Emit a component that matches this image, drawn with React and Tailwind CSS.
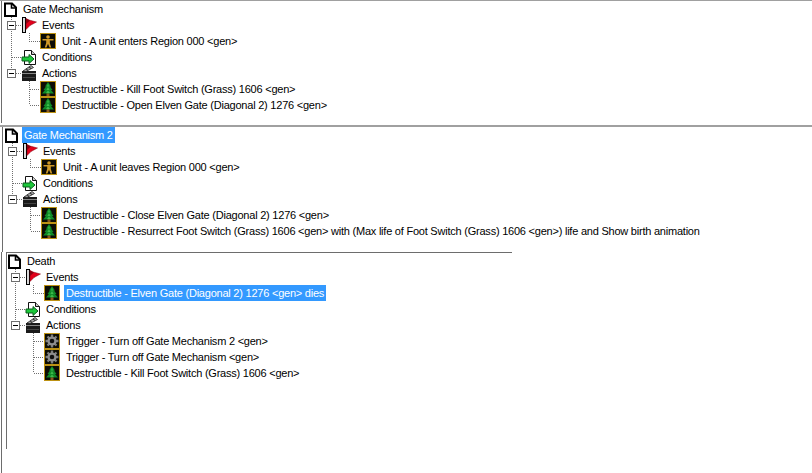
import React from 'react';

const font = { fontFamily: '"Liberation Sans", sans-serif' };

function PageIcon() {
  return (
    <svg width="16" height="16" viewBox="0 0 16 16" className="shrink-0">
      <path d="M3 2.5H10L14 6.5V15H3Z" fill="#fff" stroke="#000" strokeWidth="2" />
      <path d="M9.5 2.5V7H14" fill="none" stroke="#000" strokeWidth="1.6" />
    </svg>
  );
}

function FlagIcon() {
  return (
    <svg width="16" height="16" viewBox="0 0 16 16" className="shrink-0">
      <rect x="1.5" y="0.5" width="3" height="15" fill="#d8d8d8" stroke="#000" />
      <path d="M5 1.5L8 3L15.5 5L9 8.5L5 12.5Z" fill="#e3001b" stroke="#7a0010" strokeWidth="0.5" />
      <path d="M5 1.5L9 3.4L5 7Z" fill="#8c0010" />
    </svg>
  );
}

function ConditionIcon() {
  return (
    <svg width="16" height="16" viewBox="0 0 16 16" className="shrink-0">
      <path d="M3.5 1.5H10.5L14.5 5.5V15.5H3.5Z" fill="#fff" stroke="#111" />
      <path d="M10.5 1.5V5.5H14.5" fill="#ccc" stroke="#111" />
      <path d="M1 8H8V5.5L13 10L8 14.5V12H1Z" fill="#1cc83a" stroke="#0b5c1c" />
    </svg>
  );
}

function ActionIcon() {
  return (
    <svg width="16" height="16" viewBox="0 0 16 16" className="shrink-0">
      <rect x="1" y="6" width="14" height="10" fill="#1a1a1a" />
      <rect x="1" y="8" width="14" height="1" fill="#888" />
      <rect x="2" y="12" width="12" height="1" fill="#444" />
      <path d="M2 6L10 0.5L12.5 2.5L5 6.5Z" fill="#a8a8a8" stroke="#222" strokeWidth="0.8" />
      <path d="M5 3.8L7 5.4M8 1.9L10 3.5" stroke="#222" strokeWidth="1" />
    </svg>
  );
}

function Frame({ children }) {
  return (
    <svg width="16" height="16" viewBox="0 0 16 16" className="shrink-0">
      <rect x="0" y="0" width="16" height="16" fill="#bd9214" />
      <rect x="1" y="1" width="14" height="14" fill="#0d0d05" />
      {children}
    </svg>
  );
}

function UnitIcon() {
  return (
    <Frame>
      <circle cx="8" cy="4" r="1.8" fill="#d09a28" />
      <path d="M2.5 6H13.5V7.6H9.8V10L11.2 14.5H9.6L8 10.8L6.4 14.5H4.8L6.2 10V7.6H2.5Z" fill="#d09a28" />
    </Frame>
  );
}

function TreeIcon() {
  return (
    <Frame>
      <rect x="6.5" y="12" width="3" height="3" fill="#8a5a20" />
      <path d="M8 1L11 5.5H10L12.5 9H11L14 12.5H2L5 9H3.5L6 5.5H5Z" fill="#0f8a26" />
      <path d="M8 2.5L9 5.5H7ZM8 6L9.6 9H6.4ZM8 9.5L10 12H6Z" fill="#3fbc4e" />
    </Frame>
  );
}

function GearIcon() {
  return (
    <Frame>
      <path d="M8 1.5V14.5M1.5 8H14.5M3.5 3.5L12.5 12.5M12.5 3.5L3.5 12.5" stroke="#7d7d7d" strokeWidth="2.4" />
      <circle cx="8" cy="8" r="4.6" fill="#8e8e8e" />
      <circle cx="8" cy="8" r="2.3" fill="#111" />
    </Frame>
  );
}

function Row({ indent, icon, label, selected, gap = 'ml-[3px]' }) {
  return (
    <div className={`flex items-center h-4 ${indent}`}>
      {icon}
      <span
        className={`${gap} text-[11px] leading-4 tracking-[-0.225px] whitespace-nowrap px-[2px] ${selected ? 'bg-[#3399ff] text-white' : 'text-black'}`}
      >
        {label}
      </span>
    </div>
  );
}

// connector lines and the minus boxes, same for all three trees apart from row count
function TreeLines({ actionCount }) {
  const lastY = 80 + actionCount * 16;
  return (
    <svg width="60" height={lastY} className="absolute left-0 top-0" shapeRendering="crispEdges">
      <g fill="none" stroke="#6f6f6f" strokeDasharray="1 1">
        <path d="M9.5 16V69M9.5 56.5H20" />
        <path d="M14 24.5H20M14 72.5H20" />
        <path d="M27.5 32V40.5H38" />
        <path d={`M27.5 80V${lastY - 8}`} />
        {Array.from({ length: actionCount }).map((_, i) => (
          <path key={i} d={`M27.5 ${88.5 + i * 16}H38`} />
        ))}
      </g>
      {[20, 68].map((y) => (
        <g key={y}>
          <rect x="5.5" y={y + 0.5} width="8" height="8" fill="#fff" stroke="#6f6f6f" />
          <rect x="7" y={y + 4} width="5" height="1" fill="#000" />
        </g>
      ))}
    </svg>
  );
}

function Tree({ title, titleSelected, eventIcon, eventLabel, eventSelected, actions }) {
  return (
    <div className="relative w-fit">
      <TreeLines actionCount={actions.length} />
      <div className="relative">
        <Row indent="pl-0" icon={<PageIcon />} label={title} selected={titleSelected} />
        <Row indent="pl-[19px]" icon={<FlagIcon />} label="Events" />
        <Row indent="pl-[38px]" gap="ml-[4px]" icon={eventIcon} label={eventLabel} selected={eventSelected} />
        <Row indent="pl-[19px]" icon={<ConditionIcon />} label="Conditions" />
        <Row indent="pl-[19px]" icon={<ActionIcon />} label="Actions" />
        {actions.map((a) => (
          <Row key={a.label} indent="pl-[38px]" gap="ml-[4px]" icon={a.icon} label={a.label} />
        ))}
      </div>
    </div>
  );
}

export default function App() {
  return (
    <div className="w-[812px] h-[473px] overflow-hidden bg-white" style={font}>
      <div className="h-[125px] border-t border-[#a0a0a0]">
        <div className="h-[122px] ml-[1px] border-l border-[#6d6d6d]">
          <Tree
            title="Gate Mechanism"
            eventIcon={<UnitIcon />}
            eventLabel="Unit - A unit enters Region 000 <gen>"
            actions={[
              { icon: <TreeIcon />, label: 'Destructible - Kill Foot Switch (Grass) 1606 <gen>' },
              { icon: <TreeIcon />, label: 'Destructible - Open Elven Gate (Diagonal 2) 1276 <gen>' },
            ]}
          />
        </div>
      </div>
      <div className="h-[127px] border-t-2 border-[#a0a0a0]">
        <div className="h-full ml-[2px] border-l border-[#6d6d6d]">
          <Tree
            title="Gate Mechanism 2"
            titleSelected
            eventIcon={<UnitIcon />}
            eventLabel="Unit - A unit leaves Region 000 <gen>"
            actions={[
              { icon: <TreeIcon />, label: 'Destructible - Close Elven Gate (Diagonal 2) 1276 <gen>' },
              {
                icon: <TreeIcon />,
                label:
                  'Destructible - Resurrect Foot Switch (Grass) 1606 <gen> with (Max life of Foot Switch (Grass) 1606 <gen>) life and Show birth animation',
              },
            ]}
          />
        </div>
      </div>
      <div className="h-[221px] ml-[1px] border-l border-[#6d6d6d]">
        <div className="ml-[4px] w-[506px] h-[197px] border-l border-t border-[#6d6d6d]">
          <div className="-ml-px">
            <Tree
              title="Death"
              eventIcon={<TreeIcon />}
              eventLabel="Destructible - Elven Gate (Diagonal 2) 1276 <gen> dies"
              eventSelected
              actions={[
                { icon: <GearIcon />, label: 'Trigger - Turn off Gate Mechanism 2 <gen>' },
                { icon: <GearIcon />, label: 'Trigger - Turn off Gate Mechanism <gen>' },
                { icon: <TreeIcon />, label: 'Destructible - Kill Foot Switch (Grass) 1606 <gen>' },
              ]}
            />
          </div>
        </div>
      </div>
    </div>
  );
}
